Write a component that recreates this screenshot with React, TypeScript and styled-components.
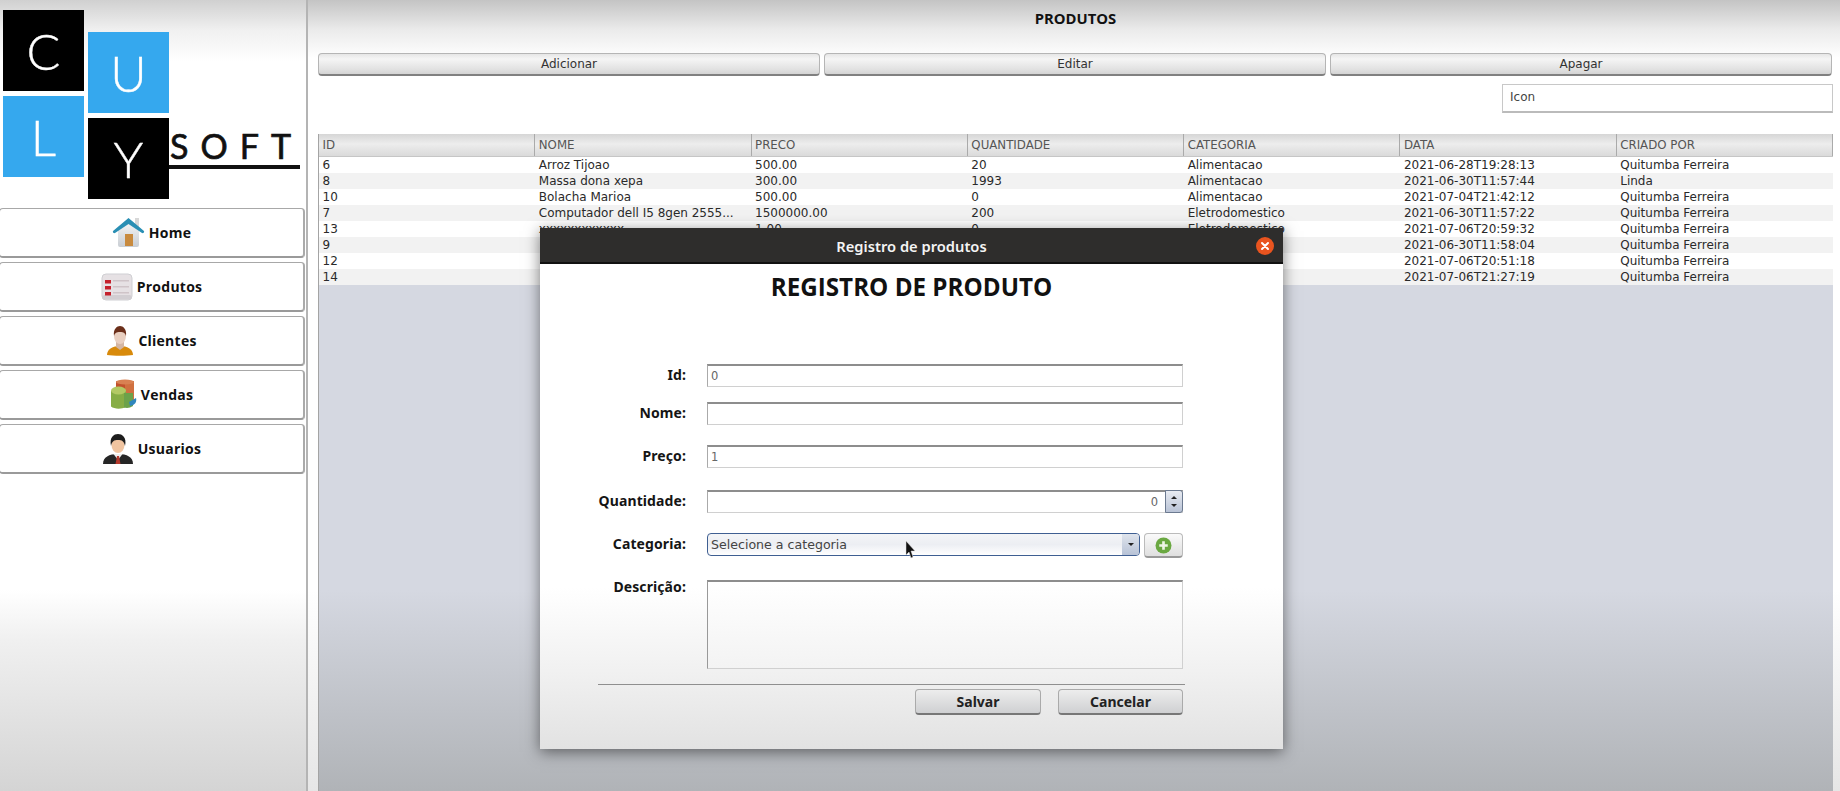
import React from "react";
import styled, { createGlobalStyle } from "styled-components";

const Global = createGlobalStyle`
  html, body { margin: 0; padding: 0; width: 1840px; height: 791px; overflow: hidden; background: #fff; }
  * { box-sizing: border-box; }
`;
const Page = styled.div`
  position: relative; width: 1840px; height: 791px; display: flex; overflow: hidden;
  font-family: "DejaVu Sans", sans-serif; color: #111;
`;
const Sidebar = styled.aside`
  width: 308px; height: 791px; flex: none; padding: 10px 2px 0 0;
  border-right: 2px solid #b4b4b4;
  background: linear-gradient(180deg,#d0d0d0 0,#f0f0f0 30px,#fff 62px,#fff 590px,#f0f0f0 640px,#d4d4d4 791px);
`;
const Logo = styled.div`
  position: relative; height: 198px;
`;
const LogoGrid = styled.div`
  display: grid; grid-template-columns: 81px 81px; column-gap: 4px; margin-left: 3px; width: 166px;
`;
const LogoCol = styled.div<{ $pad: number }>`
  display: flex; flex-direction: column; gap: 5px; padding-top: ${p => p.$pad}px;
`;
const Tile = styled.div<{ $bg: string }>`
  width: 81px; height: 81px; background: ${p => p.$bg}; color: #fff; display: flex; align-items: center; justify-content: center;
  font: 300 50px "Lato", sans-serif; -webkit-text-stroke: 0.4px #fff;
`;
const SoftBlock = styled.div`
  position: absolute; left: 169px; top: 121px; width: 131px; height: 38px; border-bottom: 4px solid #111;
  font: 400 34px "Lato", sans-serif; letter-spacing: 12px; color: #111; line-height: 30px; padding-left: 1px;
  white-space: nowrap; -webkit-text-stroke: 0.7px #111;
`;
const Nav = styled.nav`
  display: flex; flex-direction: column; gap: 4px;
`;
const NavButton = styled.div`
  width: 306px; height: 50px; margin-left: -1px; display: flex; align-items: center; justify-content: center; gap: 4px;
  background: #fff;
  border: 1px solid #a8a8a8; border-bottom: 2px solid #9a9a9a; border-right: 2px solid #aaa; border-radius: 4px;
  font: 700 14px "Open Sans", sans-serif; letter-spacing: .25px; color: #111;
`;
const Main = styled.main`
  flex: 1; display: flex; flex-direction: column; height: 791px; padding: 0 7px 0 10px;
  background: linear-gradient(180deg,#c4c4c4 0,#ebebeb 30px,#fff 58px,#fff 590px,#e6e6e6 791px);
`;
const Title = styled.div`
  height: 53px; padding-top: 8px; text-align: center; font: 700 14.8px/20px "Open Sans", sans-serif; color: #111;
`;
const Actions = styled.div`
  display: grid; grid-template-columns: repeat(3, 1fr); column-gap: 4px; height: 23px; margin-right: 1px;
`;
const ActionButton = styled.div`
  display: flex; align-items: center; justify-content: center; font-size: 12px; color: #333;
  background: linear-gradient(180deg,#e6e6e6,#f5f5f5 25%,#e2e2e2 75%,#d4d4d4);
  border: 1px solid #b5b5b5; border-bottom: 2px solid #808080; border-radius: 4px;
`;
const SearchRow = styled.div`
  display: flex; justify-content: flex-end; padding-top: 8px; height: 58px;
`;
const Search = styled.div`
  width: 331px; height: 29px; background: #fff; border: 1px solid #c8c8c8; border-bottom: 2px solid #bbb; padding: 0 7px;
  font-size: 12px; line-height: 25px; color: #444;
`;
const TableWrap = styled.div`
  flex: 1; display: flex; flex-direction: column; border-left: 1px solid #a4a4a4;
  background: linear-gradient(180deg,#d5d8e1 456px,#b0b3b7 100%);
`;
const Grid = styled.div`
  display: grid; grid-template-columns: repeat(7, 1fr);
`;
const Head = styled(Grid)`
  height: 23px; background: linear-gradient(180deg,#d6d6d6,#ededed 45%,#dadada);
  border-bottom: 1px solid #c6c6c6;
`;
const HeadCell = styled.div`
  font-size: 11.8px; line-height: 22px; padding-left: 3.5px; color: #555; border-right: 1px solid #aaa;
  white-space: nowrap; overflow: hidden;
`;
const Row = styled(Grid)<{ $odd: boolean }>`
  height: 16px; background: ${p => (p.$odd ? "#f2f2f2" : "#fff")};
`;
const Cell = styled.div`
  font-size: 12px; line-height: 16px; padding-left: 3.5px; color: #2a2a2a; white-space: nowrap; overflow: hidden;
`;
const Modal = styled.section`
  position: absolute; left: 540px; top: 228px; width: 743px; height: 521px;
  display: flex; flex-direction: column;
  background: linear-gradient(180deg,#fff 69%,#f0f0f0 86%,#e2e2e2 100%);
  box-shadow: 0 3px 14px rgba(0,0,0,.5);
`;
const TitleBar = styled.header`
  position: relative; height: 36px; flex: none; padding-top: 1px; background: #2e2d2c; border-bottom: 2px solid #111;
  color: #f4f4f4; display: flex; align-items: center; justify-content: center;
  font: 600 14.7px "Noto Sans", sans-serif;
`;
const Close = styled.span`
  position: absolute; right: 9px; top: 9px; width: 18px; height: 18px; border-radius: 50%;
  background: #e9541f; display: flex; align-items: center; justify-content: center;
`;
const Heading = styled.h1`
  margin: 7px 0 0; height: 93px; text-align: center; color: #111;
  font: 700 24.2px/32px "Open Sans", sans-serif;
`;
const Form = styled.div`
  display: grid; grid-template-columns: 146px 476px; column-gap: 21px;
  grid-template-rows: 38px 43px 45px 43px 47px 89px;
`;
const Label = styled.label<{ $top?: number }>`
  text-align: right; font: 700 14px "Noto Sans", sans-serif; letter-spacing: .1px; color: #151515; line-height: 23px;
  margin-top: ${p => p.$top ?? -1}px;
`;
const Field = styled.div`
  height: 23px; background: #fff; border: 1px solid #d0d0d0; border-top: 2px solid #8d8d8d; border-left-color: #aaa;
  font-size: 11.5px; line-height: 20px; padding: 0 3px; color: #666;
`;
const SpinWrap = styled.div`
  height: 23px; display: flex; background: #fff; border: 1px solid #d0d0d0; border-top: 2px solid #8d8d8d; border-left-color: #aaa;
`;
const SpinValue = styled.div`
  flex: 1; text-align: right; padding-right: 7px; font-size: 11.5px; line-height: 20px; color: #666;
`;
const SpinBtn = styled.div`
  width: 18px; height: 23px; margin: -2px -1px 0 0; border: 1px solid #6c7a90; border-radius: 0 3px 3px 0;
  background: linear-gradient(180deg,#e8ebf1,#b9c3d6); display: flex; flex-direction: column; align-items: center; justify-content: space-around; padding: 3px 0;
`;
const TriUp = styled.i`
  width: 0; height: 0; border: 3px solid transparent; border-top: 0; border-bottom: 3px solid #222;
`;
const TriDown = styled.i`
  width: 0; height: 0; border: 3px solid transparent; border-bottom: 0; border-top: 3px solid #222;
`;
const ComboRow = styled.div`
  display: flex; gap: 4px; align-items: flex-start;
`;
const Combo = styled.div`
  flex: 1; height: 23px; border: 1.5px solid #3f5f92; border-radius: 4px; display: flex;
  background: linear-gradient(180deg,#f4f5f7,#eceef3 50%,#fff);
  font-size: 12.6px; line-height: 21px; color: #444; overflow: hidden;
`;
const ComboText = styled.div`
  flex: 1; padding-left: 3px;
`;
const ComboArrow = styled.div`
  width: 17px; background: linear-gradient(180deg,#dfe4ec,#b7c2d6); display: flex; align-items: center; justify-content: center;
`;
const PlusBtn = styled.div`
  width: 39px; height: 25px; border: 1px solid #bbb; border-bottom: 2px solid #999; border-radius: 4px;
  background: linear-gradient(180deg,#fafafa,#dfdfdf); display: flex; align-items: center; justify-content: center;
`;
const Area = styled.div`
  height: 89px; background: linear-gradient(180deg,#fff,#f3f3f3); border: 1px solid #d0d0d0; border-top: 2px solid #8d8d8d; border-left-color: #999;
`;
const Separator = styled.hr`
  margin: 15px 0 0 58px; width: 587px; height: 1px; border: 0; background: #8f8f8f;
`;
const Footer = styled.div`
  display: flex; gap: 17px; margin: 4px 0 0 375px;
`;
const DialogBtn = styled.div<{ $w: number }>`
  width: ${p => p.$w}px; height: 26px; display: flex; align-items: center; justify-content: center;
  font: 700 14px "Noto Sans", sans-serif; color: #222;
  background: linear-gradient(180deg,#ededed,#cfd0d2); border: 1px solid #aaa; border-bottom: 2px solid #777; border-radius: 4px;
`;
const Pointer = styled.svg`
  position: absolute; left: 905px; top: 541px;
`;

const HomeIcon = () => (
  <svg width="33" height="31" viewBox="0 0 33 31">
    <defs><linearGradient id="hw" x1="0" y1="0" x2="0" y2="1"><stop offset="0" stopColor="#f4f4f4" /><stop offset="1" stopColor="#c9ced4" /></linearGradient></defs>
    <rect x="23" y="1" width="4" height="9" fill="#d8d8d8" />
    <path d="M6 13 16.500 5 27 13v15a2 2 0 0 1-2 2H8a2 2 0 0 1-2-2z" fill="url(#hw)" />
    <rect x="13" y="17" width="8" height="12" fill="#c88a3e" />
    <path d="M1 14 16.500 1 32 14c.6 1.200-.8 2.600-2 2L16.500 7 3 16c-1.200.6-2.600-.8-2-2z" fill="#2a8fb4" />
  </svg>
);
const ListIcon = () => (
  <svg width="32" height="28" viewBox="0 0 32 28">
    <rect x="1" y="1" width="30" height="26" rx="4" fill="#e6e1e4" stroke="#cfcfd3" />
    <rect x="1.500" y="22" width="29" height="4.500" rx="2" fill="#d2ced2" />
    <g fill="#c5212d"><rect x="4" y="7" width="6" height="3.500" /><rect x="4" y="13" width="6" height="3.500" /><rect x="4" y="19" width="6" height="3.500" /></g>
    <g fill="#cfc4c8"><rect x="12" y="7" width="16" height="1.500" /><rect x="12" y="13" width="16" height="1.500" /><rect x="12" y="19" width="16" height="1.500" /></g>
  </svg>
);
const ClientIcon = () => (
  <svg width="28" height="31" viewBox="0 0 28 31">
    <path d="M1 30c0-6 6-9 13-9s13 3 13 9c-6 1-20 1-26 0z" fill="#d88a0b" />
    <path d="M10 17h8v5l-4 3-4-3z" fill="#d4b6a3" />
    <ellipse cx="14" cy="11" rx="6" ry="8" fill="#e9cfc0" />
    <path d="M8 11C7 4 11 1 14 1s7 3 6 10c-1-3-2-4-6-4s-5 1-6 4z" fill="#6b2f1a" />
  </svg>
);
const SalesIcon = () => (
  <svg width="27" height="31" viewBox="0 0 27 31">
    <rect x="6" y="2" width="18" height="20" rx="1" fill="#c2512d" />
    <rect x="15" y="2" width="9" height="20" fill="#d0703f" />
    <ellipse cx="15" cy="3" rx="9" ry="2.500" fill="#d98152" />
    <path d="M1 12h15v16c-5 2.500-12 2-15-.5z" fill="#87ad45" />
    <path d="M14 14h9v13c-3 2-6 2.500-9 1.500z" fill="#6ca24a" />
    <ellipse cx="8.500" cy="11.500" rx="7.500" ry="4" fill="#b3c964" />
    <path d="M19 23l7-4c1 4-1 7-6 8z" fill="#2f86bd" />
  </svg>
);
const UserIcon = () => (
  <svg width="32" height="32" viewBox="0 0 32 32">
    <path d="M1 31c0-7 6-10 15-10s15 3 15 10z" fill="#262626" />
    <path d="M11.500 21h9L16 27z" fill="#efefef" />
    <path d="M15 23h2l1.500 8h-5z" fill="#b5392d" />
    <ellipse cx="16" cy="12" rx="6.500" ry="8" fill="#f0c4a0" />
    <path d="M9 13C7 4 12 1 16 1s9 3 7 12c-1-5-3-6-7-6s-6 1-7 6z" fill="#1d1d1d" />
  </svg>
);

const navItems: [string, React.ReactNode][] = [
  ["Home", <HomeIcon key="h" />],
  ["Produtos", <ListIcon key="p" />],
  ["Clientes", <ClientIcon key="c" />],
  ["Vendas", <SalesIcon key="v" />],
  ["Usuarios", <UserIcon key="u" />],
];
const cols = ["ID", "NOME", "PRECO", "QUANTIDADE", "CATEGORIA", "DATA", "CRIADO POR"];
const rows = [
  ["6", "Arroz Tijoao", "500.00", "20", "Alimentacao", "2021-06-28T19:28:13", "Quitumba Ferreira"],
  ["8", "Massa dona xepa", "300.00", "1993", "Alimentacao", "2021-06-30T11:57:44", "Linda"],
  ["10", "Bolacha Marioa", "500.00", "0", "Alimentacao", "2021-07-04T21:42:12", "Quitumba Ferreira"],
  ["7", "Computador dell I5 8gen 2555...", "1500000.00", "200", "Eletrodomestico", "2021-06-30T11:57:22", "Quitumba Ferreira"],
  ["13", "xxxxxxxxxxxx", "1.00", "0", "Eletrodomestico", "2021-07-06T20:59:32", "Quitumba Ferreira"],
  ["9", "", "", "", "", "2021-06-30T11:58:04", "Quitumba Ferreira"],
  ["12", "", "", "", "", "2021-07-06T20:51:18", "Quitumba Ferreira"],
  ["14", "", "", "", "", "2021-07-06T21:27:19", "Quitumba Ferreira"],
];

export default function App() {
  return (
    <Page>
      <Global />
      <Sidebar>
        <Logo>
          <LogoGrid>
            <LogoCol $pad={0}>
              <Tile $bg="#000">C</Tile>
              <Tile $bg="#35a8ee">L</Tile>
            </LogoCol>
            <LogoCol $pad={22}>
              <Tile $bg="#35a8ee">U</Tile>
              <Tile $bg="#000">Y</Tile>
            </LogoCol>
          </LogoGrid>
          <SoftBlock>SOFT</SoftBlock>
        </Logo>
        <Nav>
          {navItems.map(([label, icon]) => (
            <NavButton key={label}>
              {icon}
              <span>{label}</span>
            </NavButton>
          ))}
        </Nav>
      </Sidebar>
      <Main>
        <Title>PRODUTOS</Title>
        <Actions>
          <ActionButton>Adicionar</ActionButton>
          <ActionButton>Editar</ActionButton>
          <ActionButton>Apagar</ActionButton>
        </Actions>
        <SearchRow>
          <Search>Icon</Search>
        </SearchRow>
        <TableWrap>
          <Head>
            {cols.map(c => <HeadCell key={c}>{c}</HeadCell>)}
          </Head>
          {rows.map((r, i) => (
            <Row key={r[0]} $odd={i % 2 === 1}>
              {r.map((c, j) => <Cell key={j}>{c}</Cell>)}
            </Row>
          ))}
        </TableWrap>
      </Main>
      <Modal>
        <TitleBar>
          Registro de produtos
          <Close>
            <svg width="10" height="10" viewBox="0 0 10 10"><path d="M2 2l6 6M8 2l-6 6" stroke="#fff" strokeWidth="2" strokeLinecap="round" /></svg>
          </Close>
        </TitleBar>
        <Heading>REGISTRO DE PRODUTO</Heading>
        <Form>
          <Label>Id:</Label><Field>0</Field>
          <Label>Nome:</Label><Field />
          <Label>Preço:</Label><Field>1</Field>
          <Label>Quantidade:</Label>
          <SpinWrap><SpinValue>0</SpinValue><SpinBtn><TriUp /><TriDown /></SpinBtn></SpinWrap>
          <Label>Categoria:</Label>
          <ComboRow>
            <Combo><ComboText>Selecione a categoria</ComboText><ComboArrow><TriDown /></ComboArrow></Combo>
            <PlusBtn>
              <svg width="17" height="17" viewBox="0 0 16 16"><circle cx="8" cy="8" r="7.500" fill="#6aa841" /><path d="M8 4v8M4 8h8" stroke="#eef5e6" strokeWidth="2.500" /></svg>
            </PlusBtn>
          </ComboRow>
          <Label $top={-5}>Descrição:</Label><Area />
        </Form>
        <Separator />
        <Footer>
          <DialogBtn $w={126}>Salvar</DialogBtn>
          <DialogBtn $w={125}>Cancelar</DialogBtn>
        </Footer>
      </Modal>
      <Pointer width="12" height="18" viewBox="0 0 12 18"><path d="M1 0v14l3-3 2 6 2-1-2-6h4z" fill="#111" stroke="#ddd" strokeWidth=".5" /></Pointer>
    </Page>
  );
}
